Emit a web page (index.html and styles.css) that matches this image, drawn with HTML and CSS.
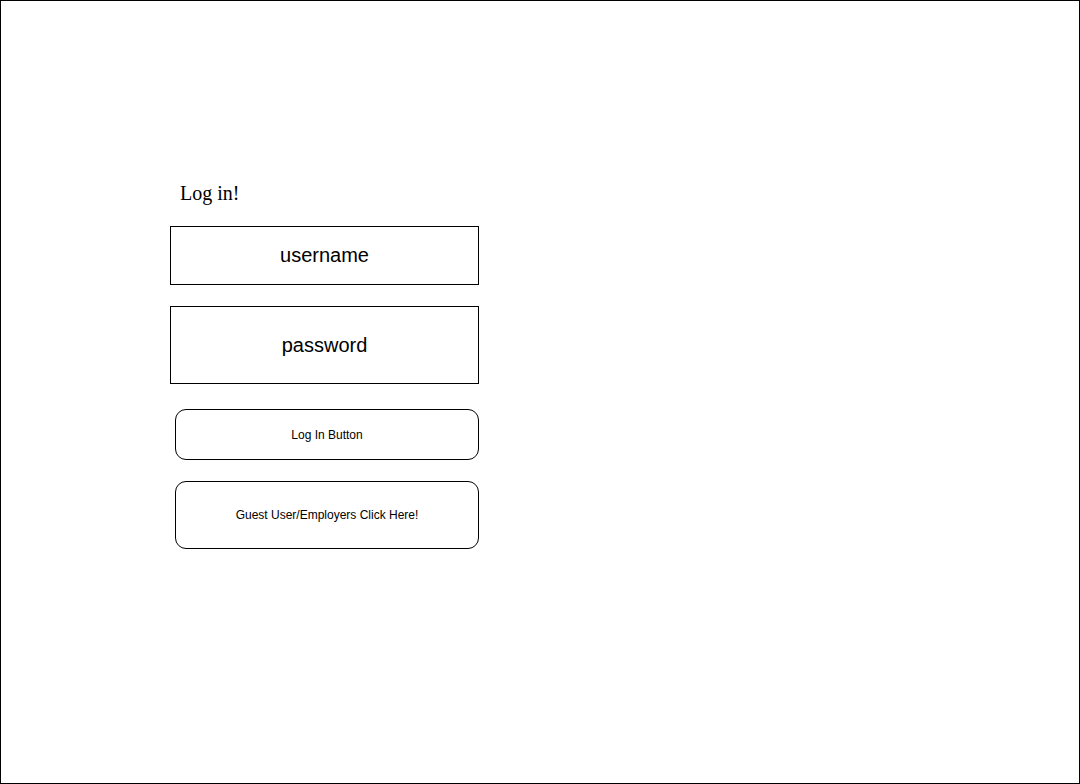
FILE: index.html
```html
<!DOCTYPE html>
<html>
<head>
<meta charset="utf-8">
<link rel="stylesheet" href="styles.css">
</head>
<body>
<div class="frame">
  <div class="login">
    <div class="title">Log in!</div>
    <div class="field field-user">username</div>
    <div class="field field-pass">password</div>
    <div class="btn btn-login">Log In Button</div>
    <div class="btn btn-guest">Guest User/Employers Click Here!</div>
  </div>
</div>
</body>
</html>
```

FILE: styles.css
```css
html, body {
  margin: 0;
  padding: 0;
  background: #fff;
}
.frame {
  box-sizing: border-box;
  width: 1080px;
  height: 784px;
  border: 1px solid #000;
  padding: 181px 0 0 169px;
}
.login {
  display: flex;
  flex-direction: column;
  align-items: flex-start;
}
.title {
  font-family: "Liberation Serif", serif;
  font-size: 20px;
  line-height: 23px;
  color: #000;
  margin-left: 10px;
  margin-bottom: 21px;
}
.field {
  box-sizing: border-box;
  width: 309px;
  border: 1px solid #000;
  display: flex;
  align-items: center;
  justify-content: center;
  font-family: "Liberation Sans", Arial, sans-serif;
  font-size: 20px;
  color: #000;
}
.field-user {
  height: 59px;
  margin-bottom: 21px;
}
.field-pass {
  height: 78px;
  margin-bottom: 25px;
}
.btn {
  box-sizing: border-box;
  width: 304px;
  margin-left: 5px;
  border: 1px solid #000;
  border-radius: 11px;
  display: flex;
  align-items: center;
  justify-content: center;
  font-family: "Liberation Sans", Arial, sans-serif;
  font-size: 12px;
  color: #000;
}
.btn-login {
  height: 51px;
  margin-bottom: 21px;
}
.btn-guest {
  height: 68px;
}
```
